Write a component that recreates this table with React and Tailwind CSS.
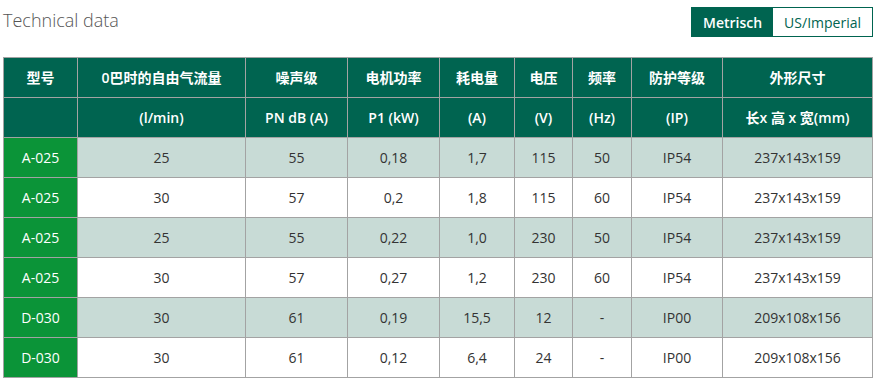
import React from "react";

const rows = [
  ["A-025", "25", "55", "0,18", "1,7", "115", "50", "IP54", "237x143x159"],
  ["A-025", "30", "57", "0,2", "1,8", "115", "60", "IP54", "237x143x159"],
  ["A-025", "25", "55", "0,22", "1,0", "230", "50", "IP54", "237x143x159"],
  ["A-025", "30", "57", "0,27", "1,2", "230", "60", "IP54", "237x143x159"],
  ["D-030", "30", "61", "0,19", "15,5", "12", "-", "IP00", "209x108x156"],
  ["D-030", "30", "61", "0,12", "6,4", "24", "-", "IP00", "209x108x156"],
];

const widths = [74, 168, 102, 92, 75, 58, 59, 91, 150];
const head1 = ["型号", "0巴时的自由气流量", "噪声级", "电机功率", "耗电量", "电压", "频率", "防护等级", "外形尺寸"];
const head2 = ["", "(l/min)", "PN dB (A)", "P1 (kW)", "(A)", "(V)", "(Hz)", "(IP)", "长x 高 x 宽(mm)"];

export default function App() {
  return (
    <div
      className="w-[875px] h-[386px] bg-white overflow-hidden"
      style={{ fontFamily: '"Open Sans", "Noto Sans CJK SC", sans-serif' }}
    >
      <div className="flex items-start justify-between pl-[3px] pr-[2px] pt-[7px] h-[50px]">
        <div className="text-[18px] font-light text-[#555] leading-[24px] mt-[1px]">Technical data</div>
        <div className="flex border border-[#006450] h-[30px] text-[14px]">
          <div className="bg-[#006450] text-white font-semibold px-[11px] flex items-center">Metrisch</div>
          <div className="bg-white text-[#006450] px-[11px] flex items-center">US/Imperial</div>
        </div>
      </div>
      <table className="ml-[3px] mt-[7px] border-collapse table-fixed text-[14px]" style={{ width: 870 }}>
        <colgroup>
          {widths.map((w, i) => (
            <col key={i} style={{ width: w }} />
          ))}
        </colgroup>
        <thead>
          <tr className="h-[40px] bg-[#006450] text-white font-semibold">
            {head1.map((h, i) => (
              <th key={i} className="border border-[#a3a3a3] text-center font-semibold p-0">{h}</th>
            ))}
          </tr>
          <tr className="h-[40px] bg-[#006450] text-white font-semibold">
            {head2.map((h, i) => (
              <th key={i} className="border border-[#a3a3a3] text-center font-semibold p-0">{h}</th>
            ))}
          </tr>
        </thead>
        <tbody>
          {rows.map((r, ri) => (
            <tr key={ri} className={`h-[40px] ${ri % 2 === 0 ? "bg-[#c8dbd6]" : "bg-white"}`}>
              {r.map((c, ci) => (
                <td
                  key={ci}
                  className={`border border-[#a3a3a3] text-center p-0 ${
                    ci === 0 ? "bg-[#0b9438] text-white" : "text-[#333]"
                  }`}
                >
                  {c}
                </td>
              ))}
            </tr>
          ))}
        </tbody>
      </table>
    </div>
  );
}
